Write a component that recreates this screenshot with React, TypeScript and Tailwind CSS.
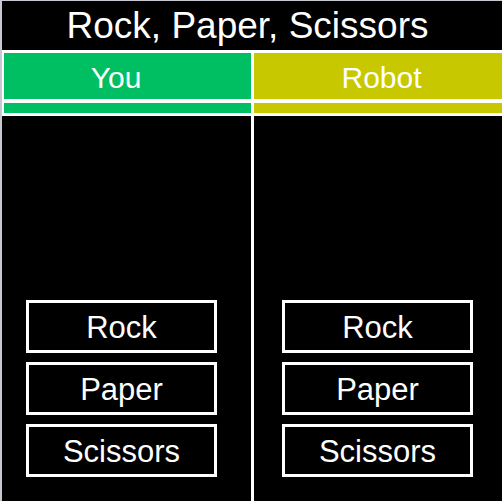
import React from "react";

const moves = ["Rock", "Paper", "Scissors"];

function MoveButtons({ offset }: { offset: string }) {
  return (
    <div className={`mt-auto mb-[24px] flex flex-col gap-[9px] ${offset}`}>
      {moves.map((m) => (
        <button
          key={m}
          className="w-[191px] h-[53px] border-[3px] border-white bg-black text-white text-[31px] leading-none flex items-center justify-center pt-[2px]"
        >
          {m}
        </button>
      ))}
    </div>
  );
}

export default function App() {
  return (
    <div
      className="w-[502px] h-[501px] bg-black text-white border-l-2 border-t border-[#c8c8d2] flex flex-col overflow-hidden"
      style={{ fontFamily: '"Liberation Sans", Arial, sans-serif' }}
    >
      {/* Title */}
      <h1 className="h-[49px] shrink-0 flex items-center justify-center pr-[9px] text-[37px] leading-none font-normal">
        Rock, Paper, Scissors
      </h1>

      {/* Player headers */}
      <div className="shrink-0 w-[500px] bg-white pt-[3px] pb-[3px] pl-[2px] grid grid-cols-[247px_248px] gap-x-[3px] gap-y-[4px]">
        <div className="h-[46px] bg-[#00bf63] flex items-center justify-center pr-[23px] pt-[3px] text-[30px] leading-none">
          You
        </div>
        <div className="h-[46px] bg-[#c8c800] flex items-center justify-center pl-[7px] pt-[3px] text-[30px] leading-none">
          Robot
        </div>
        <div className="h-[10px] bg-[#00bf63]" />
        <div className="h-[10px] bg-[#c8c800]" />
      </div>

      {/* Board */}
      <div className="flex-1 flex">
        <div className="w-[252px] border-r-[3px] border-white flex flex-col">
          <MoveButtons offset="ml-[24px]" />
        </div>
        <div className="flex-1 flex flex-col">
          <MoveButtons offset="ml-[28px]" />
        </div>
      </div>
    </div>
  );
}
